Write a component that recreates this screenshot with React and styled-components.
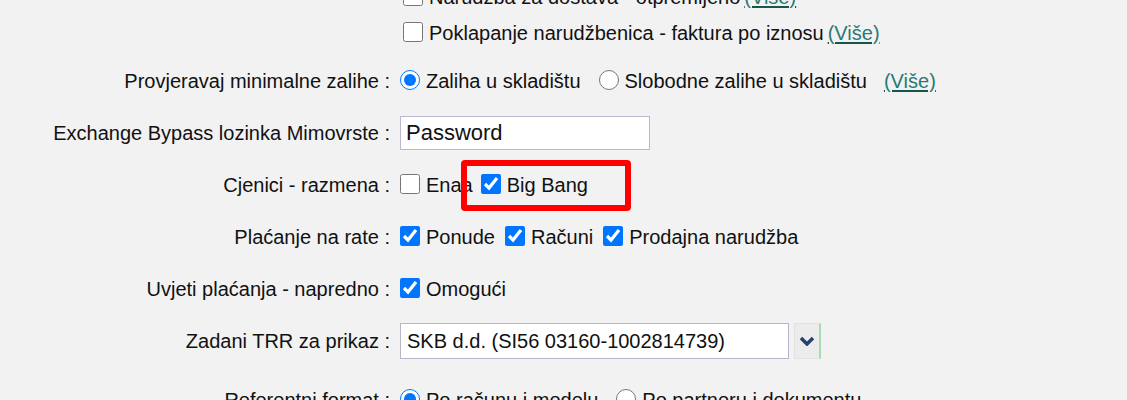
import React from 'react'
import styled, { createGlobalStyle } from 'styled-components'

const Global = createGlobalStyle`
  html, body {
    margin: 0;
    padding: 0;
    background: #f2f2f2;
  }
  body {
    font-family: "Liberation Sans", Arial, sans-serif;
    font-size: 20px;
    color: #111;
  }
`

const Page = styled.div`
  width: 1127px;
  height: 400px;
  overflow: hidden;
  background: #f2f2f2;
`

const Form = styled.div`
  margin-top: -29px;
`

const Row = styled.div`
  display: grid;
  grid-template-columns: 390px 1fr;
  padding: ${p => p.$pt ?? 8}px 0 ${p => p.$pb ?? 8}px;
`

const Label = styled.div`
  text-align: right;
  height: 36px;
  line-height: 36px;
  white-space: nowrap;
`

const Controls = styled.div`
  position: relative;
  padding-left: 10px;
  display: flex;
  flex-direction: column;
`

const Line = styled.div`
  display: flex;
  align-items: center;
  height: 36px;
  white-space: nowrap;
`

const Option = styled.label`
  display: flex;
  align-items: center;
  margin-right: ${p => p.$gap ?? 10}px;
  margin-left: ${p => p.$indent ?? 0}px;
`

const Box = styled.input`
  width: 20px;
  height: 20px;
  margin: 0 6px 2px 0;
  accent-color: #0075ff;
`

const More = styled.a`
  margin-left: ${p => p.$gap ?? 4}px;
  color: #2a7a76;
  text-decoration: underline;
  text-decoration-color: #15584a;
  text-underline-offset: 2px;
  cursor: pointer;
`

const TextField = styled.input`
  box-sizing: border-box;
  width: 250px;
  height: 34px;
  border: 1px solid #b9b9cf;
  background: #fff;
  font-family: "Liberation Sans", Arial, sans-serif;
  font-size: 22px;
  color: #111;
  padding: 0 5px;
  outline: none;
`

const SelectWrap = styled.div`
  display: flex;
  align-items: center;
  gap: 5px;
`

const SelectBox = styled.div`
  box-sizing: border-box;
  width: 389px;
  height: 36px;
  border: 1px solid #b6b6cb;
  background: #fff;
  line-height: 34px;
  padding-left: 6px;
`

const SelectButton = styled.div`
  box-sizing: border-box;
  width: 27px;
  height: 36px;
  background: #ececec;
  border: 1px solid #e2e2e2;
  border-right: 2px solid #a6dcb2;
  display: flex;
  align-items: center;
  justify-content: center;
`

const Highlight = styled.div`
  position: absolute;
  left: 71px;
  top: -7px;
  width: 170px;
  height: 51px;
  box-sizing: border-box;
  border: 6px solid #ff0000;
  border-radius: 4px;
  pointer-events: none;
`

const Check = ({ label, checked, indent, gap }) => (
  <Option $indent={indent} $gap={gap}>
    <Box type="checkbox" defaultChecked={checked} />
    {label}
  </Option>
)

const Radio = ({ name, label, checked, gap }) => (
  <Option $gap={gap}>
    <Box type="radio" name={name} defaultChecked={checked} />
    {label}
  </Option>
)

export default function App() {
  return (
    <Page>
      <Global />
      <Form>
        <Row $pb={4}>
          <Label />
          <Controls>
            <Line>
              <Check indent={3} gap={0} label="Narudžba za dostava - otpremljeno" />
              <More>(Više)</More>
            </Line>
            <Line>
              <Check indent={3} gap={0} label="Poklapanje narudžbenica - faktura po iznosu" />
              <More>(Više)</More>
            </Line>
          </Controls>
        </Row>

        <Row>
          <Label>Provjeravaj minimalne zalihe :</Label>
          <Controls>
            <Line>
              <Radio name="zalihe" checked gap={18} label="Zaliha u skladištu" />
              <Radio name="zalihe" gap={0} label="Slobodne zalihe u skladištu" />
              <More $gap={17}>(Više)</More>
            </Line>
          </Controls>
        </Row>

        <Row>
          <Label>Exchange Bypass lozinka Mimovrste :</Label>
          <Controls>
            <Line>
              <TextField defaultValue="Password" />
            </Line>
          </Controls>
        </Row>

        <Row>
          <Label>Cjenici - razmena :</Label>
          <Controls>
            <Line>
              <Check label="Enaa" gap={8} />
              <Check label="Big Bang" checked />
            </Line>
            <Highlight />
          </Controls>
        </Row>

        <Row>
          <Label>Plaćanje na rate :</Label>
          <Controls>
            <Line>
              <Check checked label="Ponude" />
              <Check checked label="Računi" />
              <Check checked label="Prodajna narudžba" />
            </Line>
          </Controls>
        </Row>

        <Row>
          <Label>Uvjeti plaćanja - napredno :</Label>
          <Controls>
            <Line>
              <Check checked label="Omogući" />
            </Line>
          </Controls>
        </Row>

        <Row $pb={15}>
          <Label>Zadani TRR za prikaz :</Label>
          <Controls>
            <Line>
              <SelectWrap>
                <SelectBox>SKB d.d. (SI56 03160-1002814739)</SelectBox>
                <SelectButton>
                  <svg width="16" height="10" viewBox="0 0 16 10">
                    <polyline points="2,2 8,8 14,2" fill="none" stroke="#2b3f72" strokeWidth="3.5" />
                  </svg>
                </SelectButton>
              </SelectWrap>
            </Line>
          </Controls>
        </Row>

        <Row>
          <Label>Referentni format :</Label>
          <Controls>
            <Line>
              <Radio name="ref" checked gap={18} label="Po računu i modelu" />
              <Radio name="ref" gap={0} label="Po partneru i dokumentu" />
            </Line>
          </Controls>
        </Row>
      </Form>
    </Page>
  )
}
